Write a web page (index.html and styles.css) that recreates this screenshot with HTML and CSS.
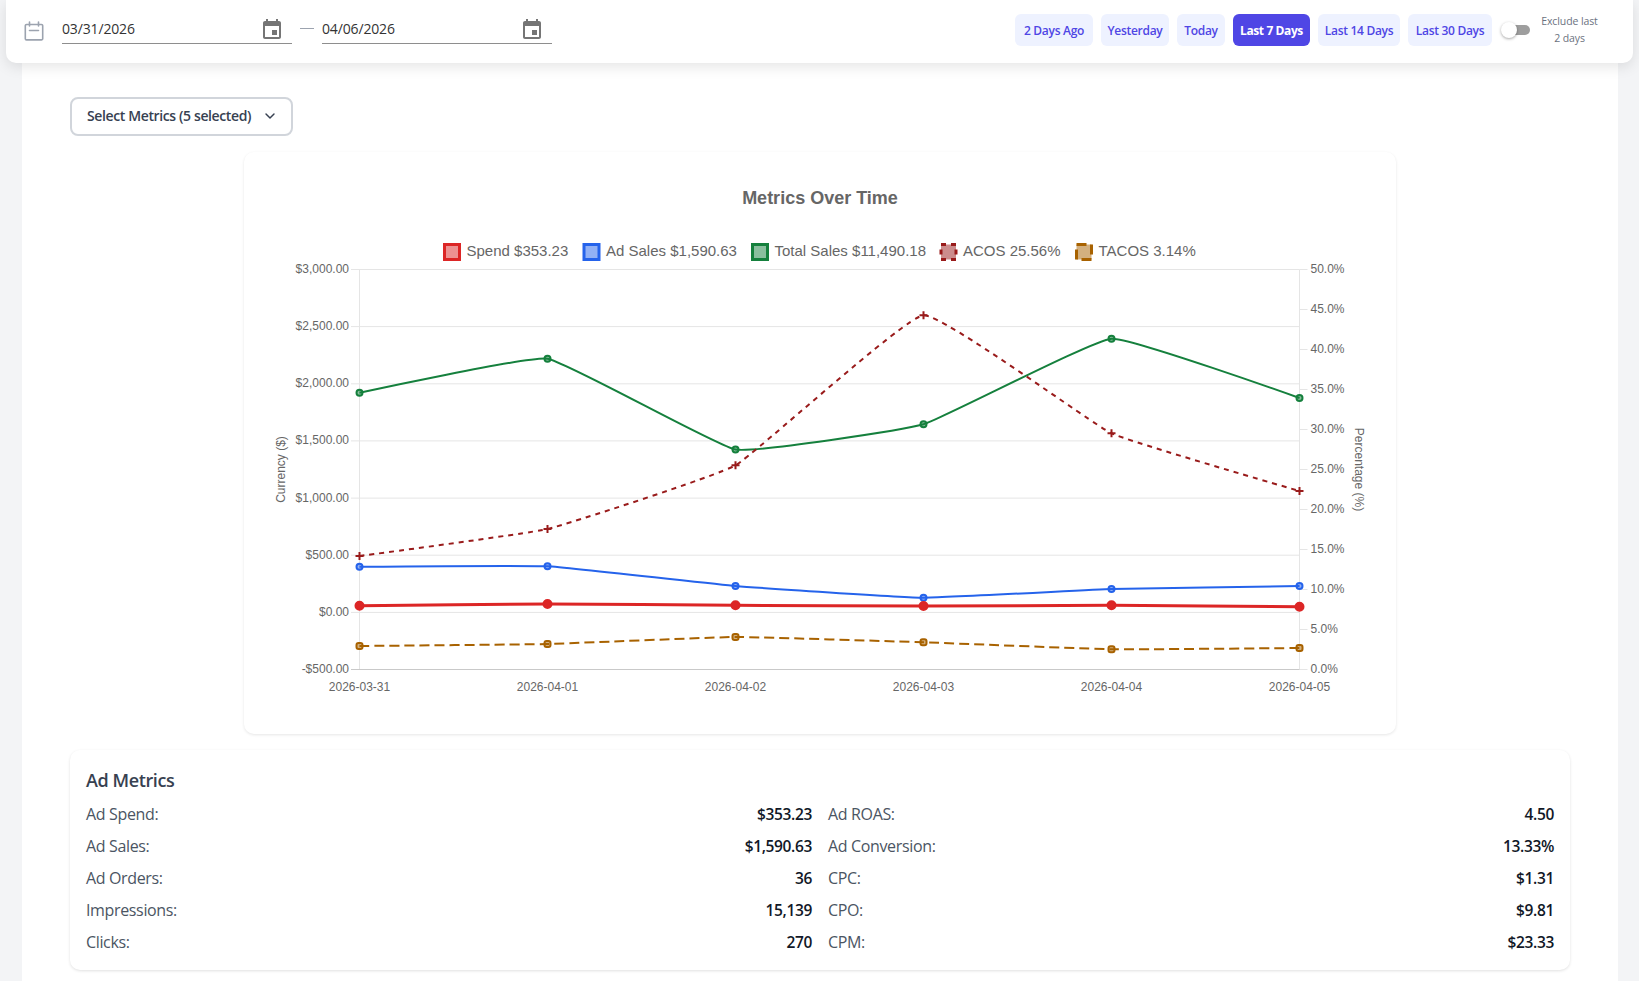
FILE: index.html
```html
<!DOCTYPE html>
<html lang="en">
<head>
<meta charset="utf-8">
<title>Metrics Over Time</title>
<link rel="stylesheet" href="styles.css">
</head>
<body>
<header class="topbar">
  <div class="dates">
    <svg class="cal" viewBox="0 0 20 20" width="20" height="20"><path d="M2.5 3.5h15a1.2 1.2 0 0 1 1.2 1.2v13a1.2 1.2 0 0 1-1.2 1.2h-15a1.2 1.2 0 0 1-1.2-1.2v-13a1.2 1.2 0 0 1 1.2-1.2zM5.5 1v4M14.5 1v4M5.5 9.5h9"/></svg>
    <div class="date date-first"><span>03/31/2026</span><svg class="picker" viewBox="0 0 24 24" width="24" height="24"><path d="M17 12h-5v5h5v-5zM16 1v2H8V1H6v2H5c-1.11 0-1.99.9-1.99 2L3 19c0 1.1.89 2 2 2h14c1.1 0 2-.9 2-2V5c0-1.1-.9-2-2-2h-1V1h-2zm3 18H5V8h14v11z"/></svg></div>
    <span class="dash"></span>
    <div class="date"><span>04/06/2026</span><svg class="picker" viewBox="0 0 24 24" width="24" height="24"><path d="M17 12h-5v5h5v-5zM16 1v2H8V1H6v2H5c-1.11 0-1.99.9-1.99 2L3 19c0 1.1.89 2 2 2h14c1.1 0 2-.9 2-2V5c0-1.1-.9-2-2-2h-1V1h-2zm3 18H5V8h14v11z"/></svg></div>
  </div>
  <div class="ranges">
    <button class="range r-ago">2 Days Ago</button>
    <button class="range r-yes">Yesterday</button>
    <button class="range r-today">Today</button>
    <button class="range r-7 range-on">Last 7 Days</button>
    <button class="range r-14">Last 14 Days</button>
    <button class="range r-30">Last 30 Days</button>
    <span class="switch"><span class="knob"></span></span>
    <span class="exclude">Exclude last<br>2 days</span>
  </div>
</header>
<main class="panel">
  <button class="select">Select Metrics (5 selected)<svg viewBox="0 0 20 20" width="16" height="16"><path d="M5 7.5l5 5 5-5"/></svg></button>
  <section class="chart-card">
    <svg class="chart" viewBox="244 152 1152 582" width="1152" height="582">
      <text class="title" x="820" y="204">Metrics Over Time</text>

      <rect class="swatch s-red" x="444.5" y="244.5" width="15" height="15"/>
      <text class="legend" x="466.5" y="256">Spend $353.23</text>
      <rect class="swatch s-blue" x="584" y="244.5" width="15" height="15"/>
      <text class="legend" x="606" y="256">Ad Sales $1,590.63</text>
      <rect class="swatch s-green" x="752.5" y="244.5" width="15" height="15"/>
      <text class="legend" x="774.5" y="256">Total Sales $11,490.18</text>
      <rect class="swatch s-acos" x="941" y="244.5" width="15" height="15"/>
      <text class="legend" x="963" y="256">ACOS 25.56%</text>
      <rect class="swatch s-tacos" x="1076.5" y="244.5" width="15" height="15"/>
      <text class="legend" x="1098.5" y="256">TACOS 3.14%</text>

      <g class="grid">
        <path d="M351 269.5H1299.5M351 326.6H1299.5M351 383.8H1299.5M351 440.9H1299.5M351 498.1H1299.5M351 555.2H1299.5M351 612.4H1299.5"/>
        <path d="M359.5 269.5V669.5M1299.5 269.5V669.5"/>
        <path d="M1299.5 269.5h8M1299.5 309.5h8M1299.5 349.5h8M1299.5 389.5h8M1299.5 429.5h8M1299.5 469.5h8M1299.5 509.5h8M1299.5 549.5h8M1299.5 589.5h8M1299.5 629.5h8M1299.5 669.5h8"/>
      </g>
      <path class="axis" d="M351 669.5H1299.5"/>

      <g class="ticks ticks-left">
        <text x="349" y="272.5">$3,000.00</text>
        <text x="349" y="329.6">$2,500.00</text>
        <text x="349" y="386.8">$2,000.00</text>
        <text x="349" y="443.9">$1,500.00</text>
        <text x="349" y="502">$1,000.00</text>
        <text x="349" y="559">$500.00</text>
        <text x="349" y="616">$0.00</text>
        <text x="349" y="672.5">-$500.00</text>
      </g>
      <g class="ticks">
        <text x="1310.5" y="272.5">50.0%</text>
        <text x="1310.5" y="312.5">45.0%</text>
        <text x="1310.5" y="352.5">40.0%</text>
        <text x="1310.5" y="392.5">35.0%</text>
        <text x="1310.5" y="432.5">30.0%</text>
        <text x="1310.5" y="472.5">25.0%</text>
        <text x="1310.5" y="512.5">20.0%</text>
        <text x="1310.5" y="552.5">15.0%</text>
        <text x="1310.5" y="592.5">10.0%</text>
        <text x="1310.5" y="632.5">5.0%</text>
        <text x="1310.5" y="672.5">0.0%</text>
      </g>
      <g class="ticks ticks-mid">
        <text x="359.5" y="691">2026-03-31</text>
        <text x="547.5" y="691">2026-04-01</text>
        <text x="735.5" y="691">2026-04-02</text>
        <text x="923.5" y="691">2026-04-03</text>
        <text x="1111.5" y="691">2026-04-04</text>
        <text x="1299.5" y="691">2026-04-05</text>
      </g>
      <text class="ticks-mid axis-title" transform="translate(285 469.5) rotate(-90)">Currency ($)</text>
      <text class="ticks-mid axis-title" transform="translate(1355 469.5) rotate(90)">Percentage (%)</text>

      <path class="line l-green" d="M359.5 392.7C359.5 392.7 528.7 355.9 547.5 358.7C566.3 361.5 716.7 446.2 735.5 449.5C754.3 452.8 904.7 429.8 923.5 424.3C942.3 418.8 1092.7 340 1111.5 338.7C1130.3 337.4 1299.5 398 1299.5 398"/>
      <g class="pts p-green">
        <circle cx="359.5" cy="392.7" r="3"/><circle cx="547.5" cy="358.7" r="3"/><circle cx="735.5" cy="449.5" r="3"/><circle cx="923.5" cy="424.3" r="3"/><circle cx="1111.5" cy="338.7" r="3"/><circle cx="1299.5" cy="398" r="3"/>
      </g>
      <path class="line l-acos" d="M359.5 556C359.5 556 528.7 533.5 547.5 529C566.3 524.5 716.7 476 735.5 465.3C754.3 454.6 904.7 316.9 923.5 315.3C942.3 313.7 1092.7 424.5 1111.5 433.3C1130.3 442.1 1299.5 491 1299.5 491"/>
      <path class="cross" d="M355.5 556h8M359.5 552v8M543.5 529h8M547.5 525v8M731.5 465.3h8M735.5 461.3v8M919.5 315.3h8M923.5 311.3v8M1107.5 433.3h8M1111.5 429.3v8M1295.5 491h8M1299.5 487v8"/>
      <path class="line l-blue" d="M359.5 566.7C359.5 566.7 528.7 565.3 547.5 566.3C566.3 567.3 716.7 584.4 735.5 586C754.3 587.6 904.7 597.6 923.5 597.7C942.3 597.8 1092.7 589.6 1111.5 589C1130.3 588.4 1299.5 586 1299.5 586"/>
      <g class="pts p-blue">
        <circle cx="359.5" cy="566.7" r="3"/><circle cx="547.5" cy="566.3" r="3"/><circle cx="735.5" cy="586" r="3"/><circle cx="923.5" cy="597.7" r="3"/><circle cx="1111.5" cy="589" r="3"/><circle cx="1299.5" cy="586" r="3"/>
      </g>
      <path class="line l-red" d="M359.5 605.7C359.5 605.7 528.7 604.2 547.5 604C566.3 603.8 716.7 605.2 735.5 605.3C754.3 605.4 904.7 606 923.5 606C942.3 606 1092.7 605.3 1111.5 605.3C1130.3 605.3 1299.5 606.7 1299.5 606.7"/>
      <g class="pts p-red">
        <circle cx="359.5" cy="605.7" r="4"/><circle cx="547.5" cy="604" r="4"/><circle cx="735.5" cy="605.3" r="4"/><circle cx="923.5" cy="606" r="4"/><circle cx="1111.5" cy="605.3" r="4"/><circle cx="1299.5" cy="606.7" r="4"/>
      </g>
      <path class="line l-tacos" d="M359.5 646C359.5 646 528.7 644.5 547.5 644C566.3 643.5 716.7 637.1 735.5 637C754.3 636.9 904.7 641.7 923.5 642.3C942.3 642.9 1092.7 649 1111.5 649.3C1130.3 649.6 1299.5 648 1299.5 648"/>
      <g class="pts p-tacos">
        <rect x="356.5" y="643" width="6" height="6" rx="2"/><rect x="544.5" y="641" width="6" height="6" rx="2"/><rect x="732.5" y="634" width="6" height="6" rx="2"/><rect x="920.5" y="639.3" width="6" height="6" rx="2"/><rect x="1108.5" y="646.3" width="6" height="6" rx="2"/><rect x="1296.5" y="645" width="6" height="6" rx="2"/>
      </g>
    </svg>
  </section>
  <section class="metrics">
    <h2>Ad Metrics</h2>
    <div class="metric-grid">
      <div class="row"><span>Ad Spend:</span><b>$353.23</b></div>
      <div class="row"><span>Ad ROAS:</span><b>4.50</b></div>
      <div class="row"><span>Ad Sales:</span><b>$1,590.63</b></div>
      <div class="row"><span>Ad Conversion:</span><b>13.33%</b></div>
      <div class="row"><span>Ad Orders:</span><b>36</b></div>
      <div class="row"><span>CPC:</span><b>$1.31</b></div>
      <div class="row"><span>Impressions:</span><b>15,139</b></div>
      <div class="row"><span>CPO:</span><b>$9.81</b></div>
      <div class="row"><span>Clicks:</span><b>270</b></div>
      <div class="row"><span>CPM:</span><b>$23.33</b></div>
    </div>
  </section>
</main>
</body>
</html>
```
FILE: styles.css
```css
* { box-sizing: border-box; }
html, body { height: 100%; }
body {
  margin: 0;
  background: #f3f4f6;
  font-family: "Open Sans", "Noto Sans", sans-serif;
  color: #374151;
  overflow: hidden;
}
.topbar {
  position: relative;
  z-index: 2;
  height: 63px;
  margin: 0 6px;
  padding: 0 35px 0 18px;
  display: flex;
  align-items: center;
  justify-content: space-between;
  background: #fff;
  border-radius: 0 0 10px 10px;
  box-shadow: 0 4px 14px rgba(0, 0, 0, .1);
}
.dates { display: flex; align-items: center; margin-bottom: 5px; }
.cal { margin: 3px 18px 0 0; }
.cal path { fill: none; stroke: #9ca3af; stroke-width: 1.6; stroke-linecap: round; }
.date {
  width: 230px;
  height: 30px;
  padding: 0 8px 1px 0;
  display: flex;
  align-items: center;
  justify-content: space-between;
  border-bottom: 1px solid #8e8e8e;
  font-size: 14px;
  letter-spacing: -.15px;
  color: #333;
}
.picker { fill: #757575; flex: none; margin-top: 4px; }
.dash { width: 14px; height: 1px; margin: 0 8px 2px; background: #9ca3af; }
.ranges { display: flex; align-items: center; gap: 8px; margin-bottom: 3px; }
.range {
  flex: none;
  height: 32px;
  padding: 0;
  border: 0;
  border-radius: 6px;
  background: #eef2ff;
  color: #4f46e5;
  font: 600 12px "Open Sans", sans-serif;
  letter-spacing: -.3px;
}
.r-ago { width: 78px; }
.r-yes { width: 68px; }
.r-today { width: 48px; }
.r-7 { width: 77px; }
.r-14 { width: 82px; }
.r-30 { width: 84px; }
.range-on { background: #4f46e5; color: #fff; font-weight: 700; letter-spacing: -.4px; }
.switch {
  position: relative;
  width: 29px;
  height: 10px;
  margin-left: 1px;
  background: #9e9e9e;
  background-clip: content-box;
  padding-left: 4px;
  border-radius: 5px;
}
.knob {
  position: absolute;
  left: 0;
  top: -3px;
  width: 16px;
  height: 16px;
  border-radius: 50%;
  background: #fff;
  box-shadow: 0 1px 3px rgba(0, 0, 0, .35);
}
.exclude {
  margin-left: 3px;
  width: 57px;
  font-size: 10.5px;
  line-height: 17px;
  text-align: center;
  letter-spacing: -.1px;
  white-space: nowrap;
  color: #6b7280;
}
.panel {
  margin: 0 21px 0 22px;
  height: 918px;
  padding: 34px 48px 0;
  background: #fff;
  display: flex;
  flex-direction: column;
}
.select {
  align-self: flex-start;
  flex: none;
  width: 223px;
  height: 39px;
  padding: 0 13px 2px 15px;
  display: flex;
  align-items: center;
  justify-content: space-between;
  background: #fff;
  border: 2px solid #d1d5db;
  border-radius: 8px;
  color: #374151;
  font: 600 14px "Open Sans", sans-serif;
  letter-spacing: -.38px;
  white-space: nowrap;
}
.select svg { flex: none; }
.select path { fill: none; stroke: #374151; stroke-width: 1.8; stroke-linecap: round; stroke-linejoin: round; }
.chart-card {
  align-self: center;
  flex: none;
  width: 1152px;
  height: 582px;
  margin-top: 16px;
  border-radius: 10px;
  background: #fff;
  box-shadow: 0 1px 3px rgba(0, 0, 0, .1);
}
.chart { display: block; font-family: "Liberation Sans", Arial, sans-serif; }
.title { font-size: 18px; font-weight: 700; fill: #666; text-anchor: middle; }
.legend { font-size: 15px; fill: #666; }
.swatch { stroke-width: 3; }
.s-red { stroke: #dc2626; fill: rgba(220, 38, 38, .5); }
.s-blue { stroke: #2563eb; fill: rgba(37, 99, 235, .5); }
.s-green { stroke: #15803d; fill: rgba(21, 128, 61, .5); }
.s-acos { stroke: #991b1b; fill: rgba(153, 27, 27, .5); stroke-dasharray: 5 5; }
.s-tacos { stroke: #a86200; fill: rgba(168, 98, 0, .5); stroke-dasharray: 10 5; }
.grid path { fill: none; stroke: #e5e5e5; stroke-width: 1; }
.axis { fill: none; stroke: #c9c9c9; stroke-width: 1; }
.ticks { font-size: 12px; fill: #666; }
.ticks-left { text-anchor: end; }
.ticks-mid { text-anchor: middle; }
.axis-title { font-size: 12px; fill: #666; }
.line { fill: none; stroke-width: 2; }
.l-green { stroke: #15803d; }
.l-blue { stroke: #2563eb; }
.l-red { stroke: #dc2626; stroke-width: 3; }
.l-acos { stroke: #991b1b; stroke-dasharray: 5 5; }
.l-tacos { stroke: #a86200; stroke-dasharray: 10 5; }
.cross { fill: none; stroke: #991b1b; stroke-width: 2; }
.pts { stroke-width: 2; }
.p-green { stroke: #15803d; fill: rgba(21, 128, 61, .5); }
.p-blue { stroke: #2563eb; fill: rgba(37, 99, 235, .5); }
.p-red { stroke: #dc2626; fill: #dc2626; }
.p-tacos { stroke: #a86200; fill: rgba(168, 98, 0, .5); }
.metrics {
  flex: none;
  height: 220px;
  margin-top: 16px;
  padding: 15px 16px 16px;
  border-radius: 10px;
  background: #fff;
  box-shadow: 0 1px 3px rgba(0, 0, 0, .12);
}
.metrics h2 {
  margin: 0 0 3px;
  height: 30px;
  line-height: 30px;
  font-size: 18px;
  font-weight: 600;
  letter-spacing: -.4px;
  color: #374151;
}
.metric-grid { display: grid; grid-template-columns: 1fr 1fr; column-gap: 16px; }
.row {
  height: 32px;
  display: flex;
  align-items: center;
  justify-content: space-between;
  font-size: 16px;
  letter-spacing: -.35px;
  color: #4b5563;
}
.row b { font-size: 15.5px; font-weight: 600; letter-spacing: -.35px; color: #111827; }
```
